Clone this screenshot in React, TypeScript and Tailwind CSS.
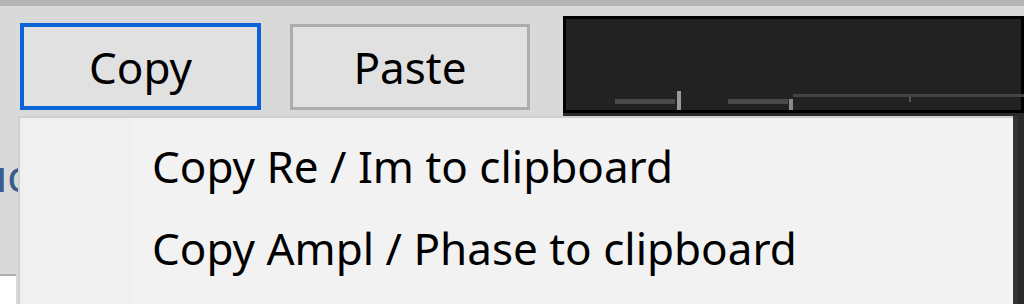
import React from 'react';

const font = { fontFamily: '"Noto Sans", "Open Sans", sans-serif' };

function PlotStrip() {
  return (
    <svg className="absolute left-0 bottom-0" width="461" height="20" viewBox="0 0 461 20">
      <rect x="49" y="9" width="60" height="5" fill="#4a4a4a" />
      <rect x="111" y="1" width="4" height="19" fill="#9a9a9a" />
      <rect x="162" y="9" width="60" height="5" fill="#4a4a4a" />
      <rect x="223" y="9" width="4" height="11" fill="#8a8a8a" />
      <rect x="227" y="4" width="234" height="3" fill="#444" />
      <rect x="343" y="7" width="2" height="5" fill="#555" />
    </svg>
  );
}

export default function App() {
  return (
    <div className="relative w-[1024px] h-[304px] overflow-hidden bg-[#d9d9d9]" style={font}>
      <div className="h-[6px] bg-[#b4b4b4]" />
      <div className="flex items-start">
        <div className="flex gap-[29px] pl-[20px] pt-[17px]">
          <button className="w-[241px] h-[87px] border-[4px] border-[#0a64d6] bg-[#e1e1e1] text-[44px] leading-none text-black">
            Copy
          </button>
          <button className="w-[240px] h-[86px] mt-[1px] border-[3px] border-[#adadad] bg-[#e1e1e1] text-[44px] leading-none text-black">
            Paste
          </button>
        </div>
        <div className="relative ml-[33px] mt-[10px] flex-1 h-[300px] bg-[#2a2a2a]">
          <div className="relative h-[97px] border-[3px] border-black bg-[#222222]">
            <PlotStrip />
          </div>
        </div>
      </div>
      <div className="absolute left-[-4px] top-[153px] text-[44px] leading-none text-[#3a5a90]">ıc</div>
      <div className="absolute left-0 top-[274px] w-[16px] h-[40px] bg-white border-t-[2px] border-[#b0b0b0]" />

      <div className="absolute left-[18px] top-[116px] w-[995px] h-[200px] flex bg-[#f2f2f2] border-l-[2px] border-t-[2px] border-[#cfcfcf] shadow-[5px_0_0_#333]">
        <div className="w-[114px] bg-[#f0f0f0]" />
        <div className="flex flex-col pt-[26px] pl-[18px] text-[44px] leading-none text-black">
          <div className="h-[82px]">Copy Re / Im to clipboard</div>
          <div className="h-[82px]">Copy Ampl / Phase to clipboard</div>
        </div>
      </div>
    </div>
  );
}
